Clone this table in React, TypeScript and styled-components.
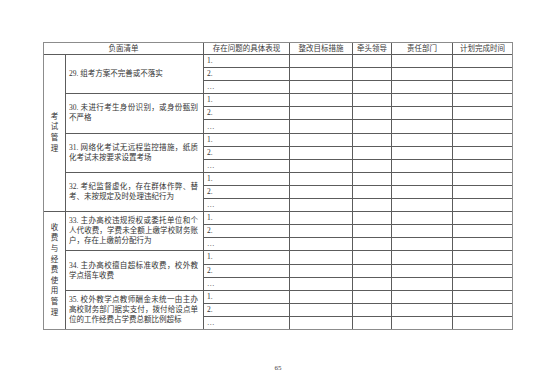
import React from "react";
import styled, { createGlobalStyle } from "styled-components";

const Global = createGlobalStyle`
  html, body { margin: 0; padding: 0; background: #fff; }
  body {
    font-family: "Liberation Serif", "Noto Sans CJK SC", serif;
    color: #333;
  }
`;

const Page = styled.div`
  width: 554px;
  height: 392px;
  box-sizing: border-box;
  padding: 42px 0 0 43px;
  display: flex;
  flex-direction: column;
  align-items: flex-start;
`;

const Table = styled.div`
  display: grid;
  grid-template-columns: 21px 137px 85px 62px 38px 60px 59px;
  grid-template-rows: 11px repeat(21, 1fr);
  height: 288px;
  gap: 1px;
  border: 1px solid #8c8c8c;
  box-sizing: border-box;
  background: #5c5c5c;
`;

const Cell = styled.div`
  background: #fff;
  font-size: 7.5px;
  line-height: 10px;
  display: flex;
  align-items: center;
  min-width: 0;
  overflow: hidden;
`;

const HeaderCell = styled(Cell)<{ $cols?: number }>`
  grid-column: span ${(p) => p.$cols ?? 1};
  justify-content: center;
  white-space: nowrap;
  color: #3a3a3a;
`;

const CategoryCell = styled(Cell)<{ $rows: number }>`
  grid-row: span ${(p) => p.$rows};
  justify-content: center;
`;

const VerticalText = styled.span`
  width: 8px;
  text-align: center;
  line-height: 10.6px;
  word-break: break-all;
`;

const ItemCell = styled(Cell)`
  grid-row: span 3;
  padding-left: 3px;
  flex-direction: column;
  align-items: flex-start;
  justify-content: center;
`;

const ItemLine = styled.span<{ $full: boolean }>`
  display: block;
  white-space: nowrap;
  width: ${(p) => (p.$full ? "129px" : "auto")};
  text-align-last: ${(p) => (p.$full ? "justify" : "auto")};
  text-justify: inter-character;
`;

const NumCell = styled(Cell)`
  padding-left: 3px;
`;

const Footer = styled.div`
  width: 470px;
  margin-top: 33px;
  text-align: center;
  font-size: 7px;
  line-height: 10px;
  color: #444;
`;

type Item = { lines: string[] };
type Group = { title: string; items: Item[] };

const groups: Group[] = [
  {
    title: "考试管理",
    items: [
      { lines: ["29. 组考方案不完善或不落实"] },
      { lines: ["30. 未进行考生身份识别，或身份甄别", "不严格"] },
      { lines: ["31. 网络化考试无远程监控措施，纸质", "化考试未按要求设置考场"] },
      { lines: ["32. 考纪监督虚化，存在群体作弊、替", "考、未按规定及时处理违纪行为"] },
    ],
  },
  {
    title: "收费与经费使用管理",
    items: [
      {
        lines: [
          "33. 主办高校违规授权或委托单位和个",
          "人代收费，学费未全额上缴学校财务账",
          "户，存在上缴前分配行为",
        ],
      },
      { lines: ["34. 主办高校擅自超标准收费，校外教", "学点搭车收费"] },
      {
        lines: [
          "35. 校外教学点教师酬金未统一由主办",
          "高校财务部门据实支付，拨付给设点单",
          "位的工作经费占学费总额比例超标",
        ],
      },
    ],
  },
];

const headers = ["存在问题的具体表现", "整改目标措施", "牵头领导", "责任部门", "计划完成时间"];
const marks = ["1.", "2.", "…"];

function Blanks() {
  return (
    <>
      <Cell />
      <Cell />
      <Cell />
      <Cell />
    </>
  );
}

export default function App() {
  return (
    <>
      <Global />
      <Page>
        <Table>
          <HeaderCell $cols={2}>负面清单</HeaderCell>
          {headers.map((h) => (
            <HeaderCell key={h}>{h}</HeaderCell>
          ))}
          {groups.map((g) => (
            <React.Fragment key={g.title}>
              <CategoryCell $rows={g.items.length * 3}>
                <VerticalText>{g.title}</VerticalText>
              </CategoryCell>
              {g.items.map((it, i) => (
                <React.Fragment key={i}>
                  <ItemCell>
                    {it.lines.map((l, j) => (
                      <ItemLine key={l} $full={j < it.lines.length - 1}>
                        {l}
                      </ItemLine>
                    ))}
                  </ItemCell>
                  {marks.map((m) => (
                    <React.Fragment key={m}>
                      <NumCell>{m}</NumCell>
                      <Blanks />
                    </React.Fragment>
                  ))}
                </React.Fragment>
              ))}
            </React.Fragment>
          ))}
        </Table>
        <Footer>65</Footer>
      </Page>
    </>
  );
}
